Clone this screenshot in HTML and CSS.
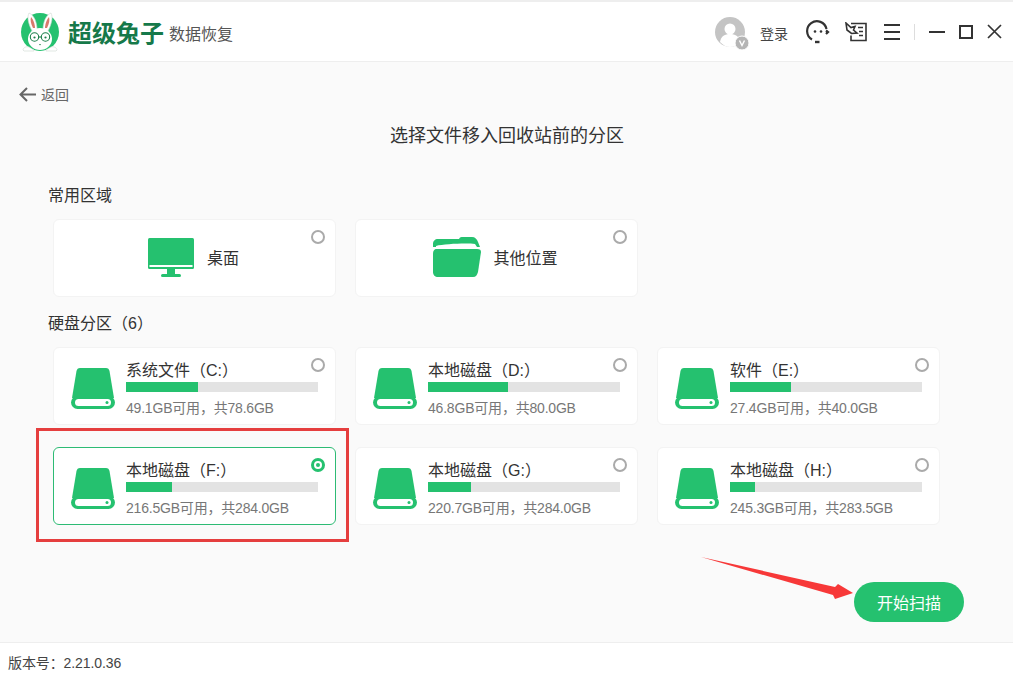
FILE: index.html
```html
<!DOCTYPE html>
<html lang="zh-CN">
<head>
    <meta charset="UTF-8">
    <title>超级兔子数据恢复</title>
    <link rel="stylesheet" href="styles.css">
</head>
<body>
    <div class="app">
        <header class="topbar">
            <div class="brand">
                <svg class="logo" width="42" height="42" viewBox="0 0 42 42">
                    <circle cx="20" cy="21" r="19" fill="#25c16f"/>
                    <path d="M12 20C8 12 7 6 9 2c5 2 8 9 8 17z" fill="#fff" stroke="#cfd8d2" stroke-width=".6"/>
                    <path d="M28 20C32 12 33 6 31 2c-5 2-8 9-8 17z" fill="#fff" stroke="#cfd8d2" stroke-width=".6"/>
                    <path d="M13 17C11 13 10 9 11 6c2 2 4 7 4 11z" fill="#d9796c"/>
                    <path d="M27 17C29 13 30 9 29 6c-2 2-4 7-4 11z" fill="#d9796c"/>
                    <ellipse cx="20" cy="28" rx="12" ry="11" fill="#fff"/>
                    <circle cx="14.500" cy="26" r="4.200" fill="#fff" stroke="#1d7f4b" stroke-width="1.100"/>
                    <circle cx="25.500" cy="26" r="4.200" fill="#fff" stroke="#1d7f4b" stroke-width="1.100"/>
                    <path d="M18.500 26h3" stroke="#1d7f4b" stroke-width="1.100"/>
                    <circle cx="14.500" cy="26.500" r="1.100" fill="#1d7f4b"/>
                    <circle cx="25.500" cy="26.500" r="1.100" fill="#1d7f4b"/>
                    <path d="M19 33h2l-1 1.500z" fill="#1d7f4b"/>
                    <path d="M3 39c0-2 3-4 6-3l5 3v1H4zM37 39c0-2-3-4-6-3l-5 3v1h10z" fill="#fff" stroke="#cfd8d2" stroke-width=".6"/>
                </svg>
                <span class="brand-name">超级兔子</span>
                <span class="brand-sub">数据恢复</span>
            </div>
            <div class="topbar-right">
                <div class="avatar">
                    <svg width="36" height="36" viewBox="0 0 36 36">
                        <circle cx="16" cy="16" r="15" fill="#c4c4c4"/>
                        <circle cx="16" cy="13" r="5.500" fill="#fff"/>
                        <path d="M6 26c1-6 5-8 10-8s9 2 10 8c-3 3-6 5-10 5s-7-2-10-5z" fill="#fff"/>
                        <circle cx="28" cy="27" r="7" fill="#b5b5b5" stroke="#fff" stroke-width="1"/>
                        <path d="M25.500 24.500l2.500 5 2.500-5" fill="none" stroke="#fff" stroke-width="1.400"/>
                    </svg>
                </div>
                <span class="login">登录</span>
                <svg class="tool-service" width="24" height="24" viewBox="0 0 24 24" fill="none" stroke="#333" stroke-width="2.200">
                    <path d="M6 19.500A9.800 9.800 0 1 1 20.500 9"/>
                    <path d="M20 10.500l2 1.500-2 2" fill="#333"/>
                    <path d="M9 22h4.500" stroke-width="2.400"/>
                    <circle cx="9" cy="11.500" r="1.300" fill="#333" stroke="none"/>
                    <circle cx="15" cy="11.500" r="1.300" fill="#333" stroke="none"/>
                </svg>
                <svg class="tool-msg" width="22" height="20" viewBox="0 0 22 20" fill="none" stroke="#333" stroke-width="1.600">
                    <path d="M6 1.500h15v17H6v-5"/>
                    <path d="M1 1l5 4.500 4-1-1.500 3.500 3.500 3-5.500.5L2 8z" fill="#fff"/>
                    <path d="M13 5.500h5M14 9.500h4M14 13.500h4" stroke-width="1.300"/>
                </svg>
                <div class="menu-icon"><i></i><i></i><i></i></div>
                <div class="divider"></div>
                <div class="win-min"></div>
                <div class="win-max"></div>
                <svg class="win-close" width="15" height="15" viewBox="0 0 15 15" stroke="#333" stroke-width="1.700">
                    <path d="M1 1l13 13M14 1L1 14"/>
                </svg>
            </div>
        </header>

        <main class="content">
            <div class="back">
                <svg width="17" height="15" viewBox="0 0 17 15" fill="none" stroke="#666" stroke-width="2">
                    <path d="M8 1L1.500 7.500 8 14M2 7.500h15"/>
                </svg>
                <span>返回</span>
            </div>
            <h1 class="title">选择文件移入回收站前的分区</h1>

            <div class="section-label">常用区域</div>
            <div class="grid">
                <div class="card place-card">
                    <svg class="monitor-icon" width="46" height="39" viewBox="0 0 46 39">
                        <rect x="0" y="0" width="46" height="31" rx="1.500" fill="#25c16f"/>
                        <rect x="1.500" y="27" width="43" height="2" fill="#fff"/>
                        <path d="M19 31h8v5h-8z" fill="#25c16f"/>
                        <rect x="13" y="36" width="20" height="3" rx="1.500" fill="#25c16f"/>
                    </svg>
                    <span class="place-name">桌面</span>
                    <span class="radio"></span>
                </div>
                <div class="card place-card">
                    <svg width="48" height="40" viewBox="0 0 48 40">
                        <path d="M5 2h21c1-2 2-2 4-2h9c3 0 5 2 6 5l2 5H0V7c0-3 2-5 5-5z" fill="#25c16f"/>
                        <path d="M3 9c8-2 30-3 39-2l2 3H3z" fill="#fff"/>
                        <path d="M4 12h40c3 0 4 1 4 3l-3 20c-1 3-2 5-5 5H5c-3 0-5-2-5-5V17c0-3 1-5 4-5z" fill="#25c16f"/>
                    </svg>
                    <span class="place-name">其他位置</span>
                    <span class="radio"></span>
                </div>
            </div>

            <div class="section-label label-disks">硬盘分区（6）</div>
            <div class="grid disks" id="disks"></div>

            <div class="actions">
                <button class="start-btn">开始扫描</button>
            </div>

            <!-- 标注 -->
            <div class="mark-box"></div>
            <svg class="mark-arrow" width="156" height="44" viewBox="0 0 156 44">
                <path d="M0 0L134 30 137 27 152 36 134 42 132 38z" fill="#f73838"/>
            </svg>
        </main>

        <footer class="footer">版本号：2.21.0.36</footer>
    </div>

    <script>
        const disks = [
            { name: '系统文件（C:）', free: '49.1GB', total: '78.6GB', pct: 37.5 },
            { name: '本地磁盘（D:）', free: '46.8GB', total: '80.0GB', pct: 41.5 },
            { name: '软件（E:）', free: '27.4GB', total: '40.0GB', pct: 32 },
            { name: '本地磁盘（F:）', free: '216.5GB', total: '284.0GB', pct: 24, selected: true },
            { name: '本地磁盘（G:）', free: '220.7GB', total: '284.0GB', pct: 22.500 },
            { name: '本地磁盘（H:）', free: '245.3GB', total: '283.5GB', pct: 13 }
        ];

        const diskList = document.getElementById('disks');

        disks.forEach(disk => {
            const card = document.createElement('div');
            card.className = disk.selected ? 'card disk-card selected' : 'card disk-card';
            card.innerHTML = `
                <svg class="disk-icon" width="44" height="41" viewBox="0 0 44 41">
                    <path d="M9 0h26c2 0 3 1 3.500 3L43 30H1L5.500 3C6 1 7 0 9 0z" fill="#25c16f"/>
                    <rect x="0" y="28" width="44" height="13" rx="6.500" fill="#25c16f"/>
                    <rect x="4" y="31" width="36" height="7" rx="3.500" fill="#fff"/>
                    <circle cx="36" cy="34.500" r="1.500" fill="#25c16f"/>
                </svg>
                <div class="disk-info">
                    <div class="disk-name">${disk.name}</div>
                    <div class="bar"><div class="bar-fill" style="width: ${disk.pct}%"></div></div>
                    <div class="disk-size">${disk.free}可用，共${disk.total}</div>
                </div>
                <span class="radio"></span>
            `;
            diskList.appendChild(card);
        });
    </script>
</body>
</html>
```

FILE: styles.css
```css
*{
    box-sizing: border-box;
}
body{
    margin: 0;
    font-family: "Liberation Sans", "Noto Sans CJK SC", sans-serif;
    color: #333;
    background-color: #fff;
}
.app{
    display: flex;
    flex-direction: column;
    height: 682px;
    overflow: hidden;
    border-top: 2px solid #eee;
}
.topbar{
    display: flex;
    justify-content: space-between;
    align-items: center;
    height: 60px;
    padding: 0 11px 0 20px;
    border-bottom: 1px solid #eee;
    flex-shrink: 0;
}
.brand{
    display: flex;
    align-items: center;
}
.logo{
    margin-right: 6px;
}
.brand-name{
    font-size: 24px;
    line-height: 30px;
    font-weight: 700;
    color: #16794a;
    font-family: "Noto Sans CJK SC", sans-serif;
}
.brand-sub{
    margin-left: 5px;
    margin-top: 2px;
    font-size: 16px;
    color: #555;
}
.topbar-right{
    display: flex;
    align-items: center;
}
.avatar{
    display: flex;
    width: 36px;
    height: 36px;
    margin-top: 5px;
}
.login{
    margin-left: 10px;
    margin-top: 2px;
    font-size: 14px;
    color: #444;
}
.tool-service{
    margin-left: 18px;
}
.tool-msg{
    margin-left: 15px;
}
.menu-icon{
    display: flex;
    flex-direction: column;
    gap: 5px;
    width: 16px;
    margin-left: 17px;
}
.menu-icon i{
    display: block;
    height: 2px;
    background-color: #333;
}
.divider{
    width: 1px;
    height: 16px;
    margin-left: 14px;
    background-color: #ddd;
}
.win-min{
    width: 16px;
    height: 2px;
    margin-left: 14px;
    background-color: #333;
}
.win-max{
    width: 14px;
    height: 14px;
    margin-left: 14px;
    border: 2px solid #333;
}
.win-close{
    margin-left: 14px;
}
.content{
    position: relative;
    flex: 1;
    padding: 23px 0 0 48px;
    background-color: #fafafa;
}
.back{
    display: flex;
    align-items: center;
    gap: 5px;
    margin-left: -29px;
    height: 18px;
    font-size: 14px;
    color: #666;
}
.title{
    margin: 20px 0 0 -47px;
    font-size: 18px;
    line-height: 26px;
    font-weight: 400;
    text-align: center;
    color: #333;
}
.section-label{
    margin-top: 36px;
    font-size: 16px;
    line-height: 22px;
    color: #333;
}
.label-disks{
    margin-top: 16px;
}
.grid{
    display: grid;
    grid-template-columns: repeat(3, 283px);
    gap: 22px 19px;
    margin-top: 12px;
    margin-left: 5px;
}
.card{
    position: relative;
    display: flex;
    align-items: center;
    height: 78px;
    background-color: #fff;
    border: 1px solid #f3f3f3;
    border-radius: 6px;
}
.place-card{
    justify-content: center;
    gap: 12px;
    padding: 0 2px 2px 0;
}
.monitor-icon{
    margin-right: 1px;
}
.place-name{
    font-size: 16px;
    color: #333;
}
.radio{
    position: absolute;
    top: 10px;
    right: 10px;
    width: 14px;
    height: 14px;
    border: 2px solid #aaa;
    border-radius: 50%;
    background-color: #fff;
}
.disk-card{
    padding-left: 17px;
}
.disk-icon{
    flex-shrink: 0;
    margin-top: 4px;
}
.disk-info{
    flex: 1;
    align-self: flex-start;
    margin: 13px 17px 0 11px;
}
.disk-name{
    font-size: 16px;
    line-height: 20px;
    color: #333;
}
.bar{
    height: 10px;
    margin-top: 1px;
    background-color: #e3e3e3;
}
.bar-fill{
    height: 100%;
    background-color: #25c16f;
}
.disk-size{
    margin-top: 6px;
    font-size: 14px;
    line-height: 20px;
    letter-spacing: -0.2px;
    color: #777;
}
.selected{
    border-color: #2dbb74;
}
.selected .radio{
    border: 3px solid #25c16f;
    background-color: #fff;
}
.selected .radio::after{
    content: "";
    position: absolute;
    top: 2px;
    left: 2px;
    width: 4px;
    height: 4px;
    border-radius: 50%;
    background-color: #25c16f;
}
.actions{
    display: flex;
    justify-content: flex-end;
    margin-top: 57px;
    padding-right: 49px;
}
.start-btn{
    width: 110px;
    height: 40px;
    border: none;
    border-radius: 20px;
    background-color: #25c16f;
    color: #fff;
    font-family: inherit;
    font-size: 16px;
    cursor: pointer;
}
.footer{
    flex-shrink: 0;
    height: 40px;
    padding: 11px 0 0 8px;
    border-top: 1px solid #eee;
    font-size: 14px;
    line-height: 18px;
    letter-spacing: -0.1px;
    color: #444;
}
.mark-box{
    position: absolute;
    left: 36px;
    top: 366px;
    width: 313px;
    height: 114px;
    border: 3px solid #e53e3e;
}
.mark-arrow{
    position: absolute;
    left: 701px;
    top: 495px;
}
```
